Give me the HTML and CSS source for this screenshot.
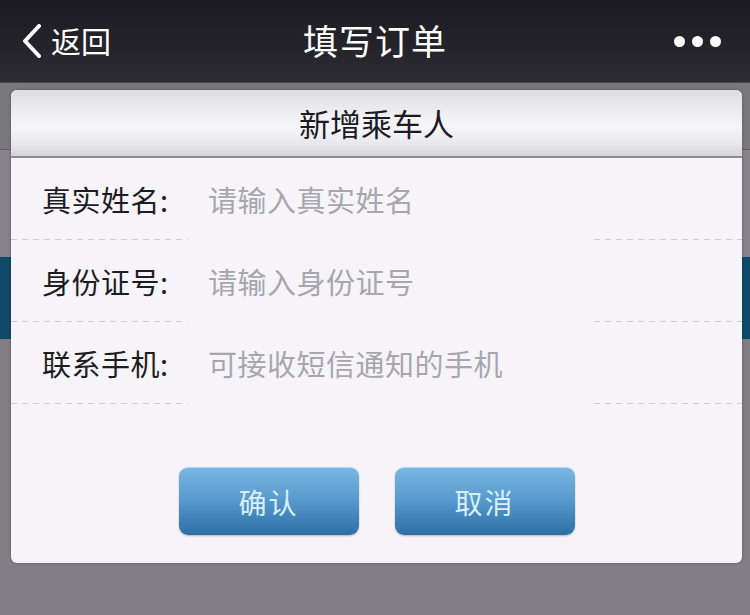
FILE: index.html
```html
<!DOCTYPE html>
<html lang="zh-CN">
<head>
<meta charset="utf-8">
<title>填写订单</title>
<link rel="stylesheet" href="styles.css">
</head>
<body>
<div class="screen">
  <header class="navbar">
    <a class="back">
      <svg class="chev" width="22" height="34" viewBox="0 0 22 34"><path d="M18 2 L4 17 L18 32" fill="none" stroke="#fff" stroke-width="4" stroke-linecap="round" stroke-linejoin="round"/></svg>
      <span>返回</span>
    </a>
    <h1 class="title">填写订单</h1>
    <div class="more"><span></span><span></span><span></span></div>
  </header>
  <main class="page">
    <div class="page-bar"></div>
    <div class="page-gap"></div>
    <div class="page-band"></div>
    <div class="page-rest"></div>

    <section class="dialog">
      <div class="dialog-head">新增乘车人</div>
      <div class="row">
        <div class="label">真实姓名:</div>
        <div class="field">请输入真实姓名</div>
      </div>
      <div class="row">
        <div class="label">身份证号:</div>
        <div class="field">请输入身份证号</div>
      </div>
      <div class="row">
        <div class="label">联系手机:</div>
        <div class="field">可接收短信通知的手机</div>
      </div>
      <div class="actions">
        <button class="btn">确认</button>
        <button class="btn">取消</button>
      </div>
    </section>
  </main>
</div>
</body>
</html>
```
FILE: styles.css
```css
* { box-sizing: border-box; }
html, body { margin: 0; padding: 0; }
body {
  width: 750px;
  height: 615px;
  overflow: hidden;
  font-family: "Noto Sans CJK SC", "Noto Sans", sans-serif;
  background: #827e85;
}
.screen {
  width: 750px;
  height: 615px;
  display: flex;
  flex-direction: column;
}
.navbar {
  height: 83px;
  flex: none;
  display: grid;
  grid-template-columns: 1fr auto 1fr;
  align-items: center;
  background: linear-gradient(#1c1b21, #25242a 60%, #2d2c32);
  border-bottom: 1px solid #4a494e;
  color: #fff;
}
.back {
  display: flex;
  align-items: center;
  gap: 8px;
  padding-left: 21px;
  font-size: 30px;
  color: #fff;
  line-height: 1;
}
.back span { margin-top: -2px; }
.title {
  margin: 0;
  font-size: 35px;
  font-weight: 400;
  letter-spacing: 1px;
  line-height: 1;
  margin-top: -4px;
}
.more {
  justify-self: end;
  display: flex;
  gap: 7px;
  padding-right: 29px;
}
.more span {
  width: 11px;
  height: 11px;
  border-radius: 50%;
  background: #fff;
}
.page {
  flex: 1;
  position: relative;
  display: flex;
  flex-direction: column;
}
.page-bar {
  height: 67px;
  background: #79787c;
  border-bottom: 1px solid #5f5e63;
}
.page-gap {
  height: 107px;
  background: #86838a;
}
.page-band {
  height: 82px;
  background: #0f4b69;
}
.page-rest {
  flex: 1;
  background: #827e85;
}
.dialog {
  position: absolute;
  left: 11px;
  top: 7px;
  width: 731px;
  height: 473px;
  background: #f6f4f9;
  border-radius: 6px;
  overflow: hidden;
  box-shadow: 0 0 3px rgba(0,0,0,0.35);
}
.dialog-head {
  height: 68px;
  display: flex;
  align-items: center;
  justify-content: center;
  font-size: 31px;
  color: #1c1c1e;
  background: linear-gradient(#dddce1, #ecebf0 30%, #f6f5f9 55%, #e9e8ed 80%, #d5d4d9);
  border-bottom: 2px solid #8d8c91;
  padding-bottom: 2px;
}
.row {
  height: 82px;
  display: flex;
  align-items: center;
  background-image: repeating-linear-gradient(to right, #cfced3 0 6px, transparent 6px 11px);
  background-size: 100% 1px;
  background-position: left bottom;
  background-repeat: no-repeat;
}
.label {
  width: 177px;
  padding-left: 31px;
  font-size: 29px;
  color: #1d1d1f;
  letter-spacing: 0.5px;
  white-space: nowrap;
}
.field {
  width: 402px;
  align-self: stretch;
  display: flex;
  align-items: center;
  padding-left: 20px;
  background: #f6f4f9;
  font-size: 29px;
  color: #a7a6ac;
  letter-spacing: 0.5px;
}
.actions {
  display: flex;
  justify-content: center;
  gap: 36px;
  margin-top: 63px;
}
.btn {
  width: 180px;
  height: 68px;
  border: none;
  border-top: 1px solid #a8e0f2;
  border-radius: 9px;
  background: linear-gradient(#79b6e2, #5a9ccf 45%, #3c7fb5 80%, #2f6ea3);
  color: #d8eff8;
  font-family: "Noto Sans CJK SC", "Noto Sans", sans-serif;
  font-size: 28px;
  letter-spacing: 2px;
  box-shadow: 0 1px 2px rgba(0,0,0,0.25);
  padding: 0;
}
```
